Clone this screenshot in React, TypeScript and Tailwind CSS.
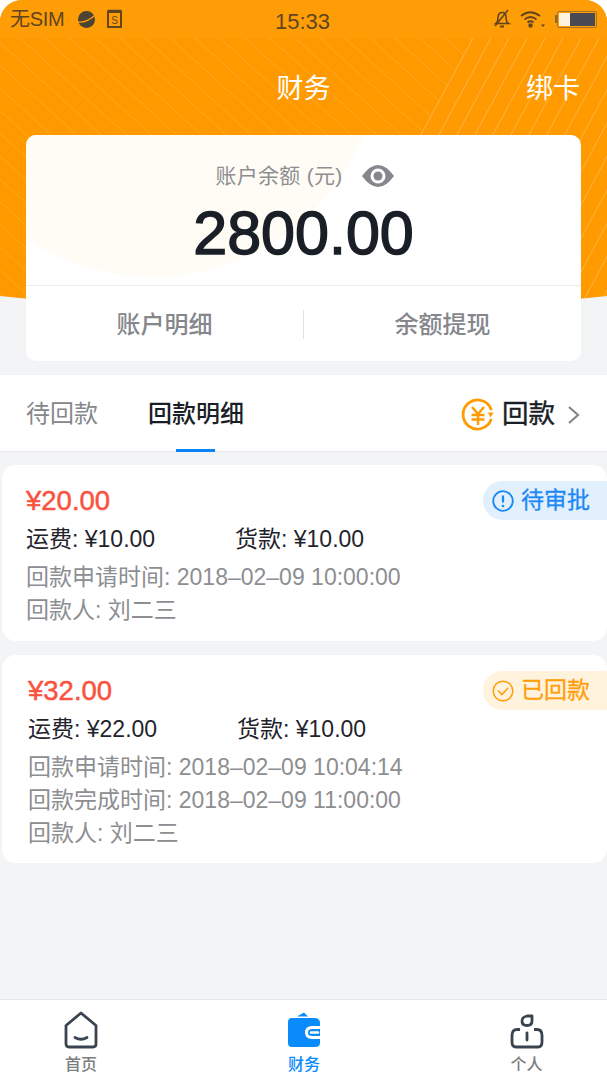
import React from 'react';

const FONT = '"Liberation Sans","Noto Sans CJK SC",sans-serif';

// Diagonal stripes + curved bottom of the orange header
const HeaderBackground = () => {
  const left: number[] = [];
  for (let i = -380; i < 480; i += 25) left.push(i);
  const right: number[] = [];
  for (let i = 473; i < 800; i += 18) right.push(i);
  return (
    <svg className="absolute top-0 left-0" width="607" height="320" viewBox="0 0 607 320">
      <defs>
        <clipPath id="hdr">
          <path d="M0 0H607V296Q303 330 0 296Z" />
        </clipPath>
        <clipPath id="hdr-left">
          <path d="M0 38H473L322 320H0Z" />
        </clipPath>
      </defs>
      <g clipPath="url(#hdr)">
        <rect width="607" height="320" fill="#ff9a03" />
        <rect width="607" height="38" fill="#fe9d05" />
        <g clipPath="url(#hdr-left)">
          {left.map(x => (
            <line key={x} x1={x} y1="38" x2={x + 310} y2="320" stroke="#ffb54a" strokeWidth="1" opacity="0.55" />
          ))}
        </g>
        {right.map(x => (
          <line key={x} x1={x} y1="38" x2={x - 152} y2="320" stroke="#ffbb5c" strokeWidth="1" opacity="0.8" />
        ))}
      </g>
    </svg>
  );
};

const StatusBar = () => (
  <div className="relative h-[38px] flex items-center justify-between pl-[10px] pr-[10px] text-[#5f4520]">
    <div className="flex items-center w-[140px]">
      <span className="text-[20px] tracking-[-0.3px]">无SIM</span>
      <svg className="ml-[13px]" width="19" height="19" viewBox="0 0 19 19">
        <circle cx="9.5" cy="9.5" r="8.500" fill="#4a4336" />
        <path d="M1 12Q9 13 17 6" stroke="#fe9d05" strokeWidth="1.4" fill="none" />
      </svg>
      <svg className="ml-[10px]" width="17" height="20" viewBox="0 0 16 20">
        <rect x="1.5" y="3" width="13" height="15" fill="none" stroke="#5f4520" strokeWidth="2" />
        <path d="M1 1.5H15" stroke="#5f4520" strokeWidth="1.5" />
        <text x="8" y="15" textAnchor="middle" fontSize="10" fill="#5f4520" fontFamily="Liberation Sans">S</text>
      </svg>
    </div>
    <span className="text-[22px] absolute left-[275px] top-[5px]">15:33</span>
    <div className="flex items-center gap-[9px]">
      <svg width="18" height="20" viewBox="0 0 18 20" fill="none" stroke="#5f4520" strokeWidth="1.6">
        <path d="M3 14.5Q5 13 5 8Q5.500 3.500 9 3.500Q13 3.500 13 8Q13 13 15.500 14.500Z" />
        <path d="M7 17.500H11" strokeWidth="2" />
        <path d="M2 17L15 1" />
      </svg>
      <svg width="26" height="18" viewBox="0 0 26 18" fill="none" stroke="#5f4520" strokeWidth="1.8">
        <path d="M1 6Q10-1.500 20 6" />
        <path d="M4.500 9.500Q10.500 4.500 16.500 9.500" />
        <path d="M7.500 12.500Q10.500 10 13.500 12.500" />
        <circle cx="10.500" cy="15.500" r="1.300" fill="#5f4520" />
        <path d="M21 14.500H25L23 17Z" fill="#5f4520" stroke="none" />
      </svg>
      <div className="flex items-center">
        <div className="w-[2px] h-[8px] bg-[#8a6a30]" />
        <div className="w-[40px] h-[17px] border border-[#a8742a] rounded-[2px] p-[1px] flex">
          <div className="w-[11px] bg-[#fff2dc]" />
          <div className="flex-1 bg-[#4a4a52]" />
        </div>
      </div>
    </div>
  </div>
);

const YenBack = () => (
  <svg width="34" height="34" viewBox="0 0 34 34" fill="none" stroke="#ff9a03" strokeWidth="2.800">
    <path d="M30 22A14.500 14.500 0 1 1 30 11" strokeLinecap="round" />
    <path d="M27 14.500L32.500 14.500L29.500 19.500Z" fill="#ff9a03" stroke="none" />
    <path d="M11 9L17 16L23 9M10.500 17H23.500M10.500 21.500H23.500M17 16V27" strokeWidth="2.400" />
  </svg>
);

const Pill = ({ tone, label }: { tone: 'blue' | 'orange'; label: string }) => {
  const blue = tone === 'blue';
  return (
    <div
      className={`absolute right-0 top-[16px] w-[124px] h-[39px] rounded-l-[20px] flex items-center pl-[9px] gap-[7px] ${
        blue ? 'bg-[#e2effd] text-[#1a88f5]' : 'bg-[#fff3de] text-[#ff9f0a]'
      }`}
    >
      {blue ? (
        <svg width="22" height="22" viewBox="0 0 22 22" fill="none" stroke="#1a88f5" strokeWidth="1.800">
          <circle cx="11" cy="11" r="9.800" />
          <path d="M11 5.500V12.500" strokeWidth="2.200" />
          <circle cx="11" cy="16" r="1.300" fill="#1a88f5" stroke="none" />
        </svg>
      ) : (
        <svg width="22" height="22" viewBox="0 0 22 22" fill="none" stroke="#ff9f0a" strokeWidth="1.500">
          <circle cx="11" cy="11" r="9.800" />
          <path d="M6 10.500L10 14.500L16 8" strokeWidth="1.600" />
        </svg>
      )}
      <span className="text-[23px] leading-none [-webkit-text-stroke:0.3px]">{label}</span>
    </div>
  );
};

const TabIcon = ({ name }: { name: 'home' | 'wallet' | 'user' }) => {
  if (name === 'home') {
    return (
      <svg width="34" height="38" viewBox="0 0 34 38" fill="none" stroke="#3a4450" strokeWidth="2.800" strokeLinejoin="round">
        <path d="M2 14.500L17 2L32 14.500V33Q32 36 29 36H5Q2 36 2 33Z" />
        <path d="M11 26.500Q17 30 23 26.500" strokeLinecap="round" />
      </svg>
    );
  }
  if (name === 'wallet') {
    return (
      <svg width="34" height="38" viewBox="0 0 34 38">
        <path d="M10 5.500L17 1.500L21 5.500Z" fill="#0a8bfb" />
        <path d="M5 7H27Q33 7 33 12V15H25Q18 15 18 21.500Q18 28 25 28H33V32Q33 36 28 36H5Q1 36 1 32V11Q1 7 5 7Z" fill="#0a8bfb" />
        <path d="M25 18H33V25H25Q21 25 21 21.500Q21 18 25 18Z" fill="#0a8bfb" />
        <path d="M24 21.500H31" stroke="#fff" strokeWidth="2.500" strokeLinecap="round" />
      </svg>
    );
  }
  return (
    <svg width="34" height="38" viewBox="0 0 34 38" fill="none" stroke="#3a4450" strokeWidth="2.800" strokeLinejoin="round">
      <path d="M22 5H17Q12 6 12 10Q12 14.500 17 14.500Q22 14.500 22 10Z" />
      <path d="M10 18.500H7Q2 18.500 2 24.500V31Q2 36 6 36H28Q32 36 32 31V24.500Q32 18.500 27 18.500H24" />
      <path d="M17 22V29" strokeLinecap="round" />
    </svg>
  );
};

const records = [
  {
    amount: '¥20.00',
    freight: '¥10.00',
    goods: '¥10.00',
    lines: ['回款申请时间: 2018–02–09 10:00:00', '回款人: 刘二三'],
    pill: 'blue' as const,
    label: '待审批',
  },
  {
    amount: '¥32.00',
    freight: '¥22.00',
    goods: '¥10.00',
    lines: ['回款申请时间: 2018–02–09 10:04:14', '回款完成时间: 2018–02–09 11:00:00', '回款人: 刘二三'],
    pill: 'orange' as const,
    label: '已回款',
  },
];

export default function App() {
  return (
    <div className="w-[607px] h-[1080px] bg-white overflow-hidden" style={{ fontFamily: FONT }}>
      <div className="relative w-full h-full bg-[#f2f4f6] rounded-[22px] overflow-hidden flex flex-col">
        <HeaderBackground />
        <StatusBar />

        {/* Nav */}
        <div className="relative h-[97px] flex items-start justify-center text-white text-[27px] pt-[33px] leading-[36px]">
          <span>财务</span>
          <span className="absolute right-[27px]">绑卡</span>
        </div>

        {/* Balance card */}
        <div className="relative mx-[26px] h-[226px] bg-white rounded-[10px] overflow-hidden flex flex-col shrink-0">
          <div className="absolute left-[-100px] top-[-312px] w-[454px] h-[454px] rounded-full bg-[#fffcf5]" />
          <div className="relative h-[151px] border-b border-[#ebedf0] flex flex-col items-center">
            <div className="flex items-center mt-[26px] h-[30px] ml-[3px]">
              <span className="text-[21px] text-[#8d8e91] tracking-[0.3px]">账户余额 (元)</span>
              <svg className="ml-[18px]" width="34" height="24" viewBox="0 0 34 24">
                <path d="M1 12Q9 1 17 1Q25 1 33 12Q25 23 17 23Q9 23 1 12Z" fill="#85878c" />
                <circle cx="17" cy="12" r="7.500" fill="#fff" />
                <circle cx="17" cy="12" r="4.500" fill="#85878c" />
              </svg>
            </div>
            <div className="text-[61px] leading-[70px] text-[#1a1f27] mt-[7px] [-webkit-text-stroke:1.5px_#1a1f27]">2800.00</div>
          </div>
          <div className="relative flex-1 flex items-center text-[24px] text-[#85878c] font-medium pt-[2px]">
            <div className="flex-1 text-center">账户明细</div>
            <div className="w-px h-[29px] bg-[#dfe1e3]" />
            <div className="flex-1 text-center">余额提现</div>
          </div>
        </div>

        {/* Tabs */}
        <div className="relative mt-[14px] h-[77px] bg-white border-b border-[#e9ebee] flex items-center shrink-0 pl-[26px] pr-[26px]">
          <span className="text-[24px] text-[#85878c] mt-[2px]">待回款</span>
          <div className="relative ml-[50px] h-full flex items-center">
            <span className="text-[24px] font-medium text-[#1a1f27] mt-[2px]">回款明细</span>
            <div className="absolute bottom-[-1px] left-[28px] w-[39px] h-[3px] bg-[#0a84f5]" />
          </div>
          <div className="ml-auto flex items-center mt-[3px]">
            <YenBack />
            <span className="ml-[7px] text-[26.500px] text-[#1a1f27] [-webkit-text-stroke:0.4px_#1a1f27]">回款</span>
            <svg className="ml-[12px]" width="14" height="20" viewBox="0 0 14 20" fill="none" stroke="#85878c" strokeWidth="2.200">
              <path d="M2 2L11 10L2 18" />
            </svg>
          </div>
        </div>

        {/* Records */}
        <div className="flex-1 flex flex-col gap-[14px] pt-[13px] pl-[2px]">
          {records.map((r, i) => (
            <div
              key={r.amount}
              className={`relative bg-white rounded-[14px] pt-[17px] ${i === 0 ? 'pl-[24px] h-[176px]' : 'pl-[26px] h-[208px]'}`}
            >
              <Pill tone={r.pill} label={r.label} />
              <div className="text-[27.500px] leading-[38px] text-[#f9523f] [-webkit-text-stroke:0.5px_#f9523f]">{r.amount}</div>
              <div className="flex text-[23px] leading-[36px] text-[#1f242c] mt-[1px]">
                <span className="w-[209px]">运费: {r.freight}</span>
                <span>货款: {r.goods}</span>
              </div>
              <div className="mt-[4px] text-[23px] leading-[33px] text-[#8d8e91]">
                {r.lines.map(l => (
                  <div key={l}>{l}</div>
                ))}
              </div>
            </div>
          ))}
        </div>

        {/* Tab bar */}
        <div className="h-[81px] bg-white border-t border-[#e4e6e9] flex shrink-0 pt-[11px] text-[16px] font-medium leading-[24px]">
          {[
            { name: 'home' as const, label: '首页', x: 'w-[162px]', c: 'text-[#7b7d80]' },
            { name: 'wallet' as const, label: '财务', x: 'w-[284px]', c: 'text-[#0a8bfb]' },
            { name: 'user' as const, label: '个人', x: 'w-[161px]', c: 'text-[#7b7d80]' },
          ].map(t => (
            <div key={t.name} className={`${t.x} flex flex-col items-center ${t.c}`}>
              <TabIcon name={t.name} />
              <span className="mt-[4px]">{t.label}</span>
            </div>
          ))}
        </div>
      </div>
    </div>
  );
}
